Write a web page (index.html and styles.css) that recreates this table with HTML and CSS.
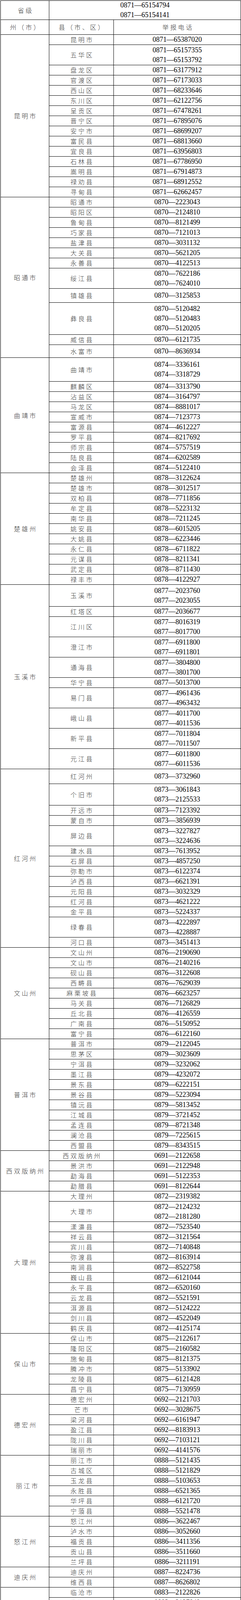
FILE: index.html
```html
<!DOCTYPE html>
<html lang="zh-CN">
<head>
<meta charset="utf-8">
<title>举报电话</title>
<link rel="stylesheet" href="styles.css">
</head>
<body>
<div class="grid">
<div class="c1 zh">省级</div><div class="c23"><span>0871—65154794<br>0871—65154141</span></div>
<div class="c1 zh">州（市）</div><div class="c2 zh">县（市、区）</div><div class="c3 zh">举报电话</div>

<div class="c1 zh s15">昆明市</div><div class="c2 zh">昆明市</div><div class="c3">0871—65387020</div>
<div class="c2 zh">五华区</div><div class="c3"><span>0871—65157355<br>0871—65153792</span></div>
<div class="c2 zh">盘龙区</div><div class="c3">0871—63177912</div>
<div class="c2 zh">官渡区</div><div class="c3">0871—67173033</div>
<div class="c2 zh">西山区</div><div class="c3">0871—68233646</div>
<div class="c2 zh">东川区</div><div class="c3">0871—62122756</div>
<div class="c2 zh">呈贡区</div><div class="c3">0871—67478261</div>
<div class="c2 zh">晋宁区</div><div class="c3">0871—67895076</div>
<div class="c2 zh">安宁市</div><div class="c3">0871—68699207</div>
<div class="c2 zh">富民县</div><div class="c3">0871—68813660</div>
<div class="c2 zh">宜良县</div><div class="c3">0871—63956803</div>
<div class="c2 zh">石林县</div><div class="c3">0871—67786950</div>
<div class="c2 zh">嵩明县</div><div class="c3">0871—67914873</div>
<div class="c2 zh">禄劝县</div><div class="c3">0871—68912552</div>
<div class="c2 zh">寻甸县</div><div class="c3">0871—62662457</div>

<div class="c1 zh s12">昭通市</div><div class="c2 zh">昭通市</div><div class="c3">0870—2223043</div>
<div class="c2 zh">昭阳区</div><div class="c3">0870—2124810</div>
<div class="c2 zh">鲁甸县</div><div class="c3">0870—8121499</div>
<div class="c2 zh">巧家县</div><div class="c3">0870—7121013</div>
<div class="c2 zh">盐津县</div><div class="c3">0870—3031132</div>
<div class="c2 zh">大关县</div><div class="c3">0870—5621205</div>
<div class="c2 zh">永善县</div><div class="c3">0870—4122513</div>
<div class="c2 zh">绥江县</div><div class="c3"><span>0870—7622186<br>0870—7624010</span></div>
<div class="c2 zh">镇雄县</div><div class="c3">0870—3125853</div>
<div class="c2 zh">彝良县</div><div class="c3"><span>0870—5120482<br>0870—5120483<br>0870—5120205</span></div>
<div class="c2 zh">威信县</div><div class="c3">0870—6121735</div>
<div class="c2 zh">水富市</div><div class="c3">0870—8636934</div>

<div class="c1 zh s10">曲靖市</div><div class="c2 zh">曲靖市</div><div class="c3"><span>0874—3336161<br>0874—3318729</span></div>
<div class="c2 zh">麒麟区</div><div class="c3">0874—3313790</div>
<div class="c2 zh">沾益区</div><div class="c3">0874—3164797</div>
<div class="c2 zh">马龙区</div><div class="c3">0874—8881017</div>
<div class="c2 zh">宣威市</div><div class="c3">0874—7123773</div>
<div class="c2 zh">富源县</div><div class="c3">0874—4612227</div>
<div class="c2 zh">罗平县</div><div class="c3">0874—8217692</div>
<div class="c2 zh">师宗县</div><div class="c3">0874—5757519</div>
<div class="c2 zh">陆良县</div><div class="c3">0874—6202589</div>
<div class="c2 zh">会泽县</div><div class="c3">0874—5122410</div>

<div class="c1 zh s11">楚雄州</div><div class="c2 zh">楚雄州</div><div class="c3">0878—3122624</div>
<div class="c2 zh">楚雄市</div><div class="c3">0878—3012517</div>
<div class="c2 zh">双柏县</div><div class="c3">0878—7711856</div>
<div class="c2 zh">牟定县</div><div class="c3">0878—5223132</div>
<div class="c2 zh">南华县</div><div class="c3">0878—7211245</div>
<div class="c2 zh">姚安县</div><div class="c3">0878—6015205</div>
<div class="c2 zh">大姚县</div><div class="c3">0878—6223446</div>
<div class="c2 zh">永仁县</div><div class="c3">0878—6711822</div>
<div class="c2 zh">元谋县</div><div class="c3">0878—8211341</div>
<div class="c2 zh">武定县</div><div class="c3">0878—8711430</div>
<div class="c2 zh">禄丰市</div><div class="c3">0878—4122927</div>

<div class="c1 zh s10">玉溪市</div><div class="c2 zh">玉溪市</div><div class="c3"><span>0877—2023760<br>0877—2023055</span></div>
<div class="c2 zh">红塔区</div><div class="c3">0877—2036677</div>
<div class="c2 zh">江川区</div><div class="c3"><span>0877—8016319<br>0877—8017700</span></div>
<div class="c2 zh">澄江市</div><div class="c3"><span>0877—6911800<br>0877—6911801</span></div>
<div class="c2 zh">通海县</div><div class="c3"><span>0877—3804800<br>0877—3801700</span></div>
<div class="c2 zh">华宁县</div><div class="c3">0877—5013700</div>
<div class="c2 zh">易门县</div><div class="c3"><span>0877—4961436<br>0877—4963432</span></div>
<div class="c2 zh">峨山县</div><div class="c3"><span>0877—4011700<br>0877—4011536</span></div>
<div class="c2 zh">新平县</div><div class="c3"><span>0877—7011804<br>0877—7011507</span></div>
<div class="c2 zh">元江县</div><div class="c3"><span>0877—6011800<br>0877—6011536</span></div>

<div class="c1 zh s14">红河州</div><div class="c2 zh">红河州</div><div class="c3">0873—3732960</div>
<div class="c2 zh">个旧市</div><div class="c3"><span>0873—3061843<br>0873—2125533</span></div>
<div class="c2 zh">开远市</div><div class="c3">0873—7123392</div>
<div class="c2 zh">蒙自市</div><div class="c3">0873—3856939</div>
<div class="c2 zh">屏边县</div><div class="c3"><span>0873—3227827<br>0873—3224636</span></div>
<div class="c2 zh">建水县</div><div class="c3">0873—7613952</div>
<div class="c2 zh">石屏县</div><div class="c3">0873—4857250</div>
<div class="c2 zh">弥勒市</div><div class="c3">0873—6122374</div>
<div class="c2 zh">泸西县</div><div class="c3">0873—6621391</div>
<div class="c2 zh">元阳县</div><div class="c3">0873—3032329</div>
<div class="c2 zh">红河县</div><div class="c3">0873—4621222</div>
<div class="c2 zh">金平县</div><div class="c3">0873—5224337</div>
<div class="c2 zh">绿春县</div><div class="c3"><span>0873—4222897<br>0873—4228887</span></div>
<div class="c2 zh">河口县</div><div class="c3">0873—3451413</div>

<div class="c1 zh s9">文山州</div><div class="c2 zh">文山州</div><div class="c3">0876—2190690</div>
<div class="c2 zh">文山市</div><div class="c3">0876—2140216</div>
<div class="c2 zh">砚山县</div><div class="c3">0876—3122608</div>
<div class="c2 zh">西畴县</div><div class="c3">0876—7629039</div>
<div class="c2 zh">麻栗坡县</div><div class="c3">0876—6623257</div>
<div class="c2 zh">马关县</div><div class="c3">0876—7126829</div>
<div class="c2 zh">丘北县</div><div class="c3">0876—4126559</div>
<div class="c2 zh">广南县</div><div class="c3">0876—5150952</div>
<div class="c2 zh">富宁县</div><div class="c3">0876—6122160</div>

<div class="c1 zh s11">普洱市</div><div class="c2 zh">普洱市</div><div class="c3">0879—2122045</div>
<div class="c2 zh">思茅区</div><div class="c3">0879—3023609</div>
<div class="c2 zh">宁洱县</div><div class="c3">0879—3232062</div>
<div class="c2 zh">墨江县</div><div class="c3">0879—4232072</div>
<div class="c2 zh">景东县</div><div class="c3">0879—6222151</div>
<div class="c2 zh">景谷县</div><div class="c3">0879—5223094</div>
<div class="c2 zh">镇沅县</div><div class="c3">0879—5813452</div>
<div class="c2 zh">江城县</div><div class="c3">0879—3721452</div>
<div class="c2 zh">孟连县</div><div class="c3">0879—8721348</div>
<div class="c2 zh">澜沧县</div><div class="c3">0879—7225615</div>
<div class="c2 zh">西盟县</div><div class="c3">0879—8343515</div>

<div class="c1 zh s4">西双版纳州</div><div class="c2 zh">西双版纳州</div><div class="c3">0691—2122658</div>
<div class="c2 zh">景洪市</div><div class="c3">0691—2122948</div>
<div class="c2 zh">勐海县</div><div class="c3">0691—5122353</div>
<div class="c2 zh">勐腊县</div><div class="c3">0691—8122644</div>

<div class="c1 zh s13">大理州</div><div class="c2 zh">大理州</div><div class="c3">0872—2319382</div>
<div class="c2 zh">大理市</div><div class="c3"><span>0872—2124232<br>0872—2181280</span></div>
<div class="c2 zh">漾濞县</div><div class="c3">0872—7523540</div>
<div class="c2 zh">祥云县</div><div class="c3">0872—3121564</div>
<div class="c2 zh">宾川县</div><div class="c3">0872—7140848</div>
<div class="c2 zh">弥渡县</div><div class="c3">0872—8163914</div>
<div class="c2 zh">南涧县</div><div class="c3">0872—8522758</div>
<div class="c2 zh">巍山县</div><div class="c3">0872—6121044</div>
<div class="c2 zh">永平县</div><div class="c3">0872—6520160</div>
<div class="c2 zh">云龙县</div><div class="c3">0872—5521591</div>
<div class="c2 zh">洱源县</div><div class="c3">0872—5124222</div>
<div class="c2 zh">剑川县</div><div class="c3">0872—4522049</div>
<div class="c2 zh">鹤庆县</div><div class="c3">0872—4125174</div>

<div class="c1 zh s6">保山市</div><div class="c2 zh">保山市</div><div class="c3">0875—2122617</div>
<div class="c2 zh">隆阳区</div><div class="c3">0875—2160582</div>
<div class="c2 zh">施甸县</div><div class="c3">0875—8121375</div>
<div class="c2 zh">腾冲市</div><div class="c3">0875—5133902</div>
<div class="c2 zh">龙陵县</div><div class="c3">0875—6121428</div>
<div class="c2 zh">昌宁县</div><div class="c3">0875—7130959</div>

<div class="c1 zh s6">德宏州</div><div class="c2 zh">德宏州</div><div class="c3">0692—2121703</div>
<div class="c2 zh">芒市</div><div class="c3">0692—3028675</div>
<div class="c2 zh">梁河县</div><div class="c3">0692—6161947</div>
<div class="c2 zh">盈江县</div><div class="c3">0692—8183913</div>
<div class="c2 zh">陇川县</div><div class="c3">0692—7103121</div>
<div class="c2 zh">瑞丽市</div><div class="c3">0692—4141576</div>

<div class="c1 zh s6 shift">丽江市</div><div class="c2 zh">丽江市</div><div class="c3">0888—5121435</div>
<div class="c2 zh">古城区</div><div class="c3">0888—5121829</div>
<div class="c2 zh">玉龙县</div><div class="c3">0888—5103653</div>
<div class="c2 zh">永胜县</div><div class="c3">0888—6521365</div>
<div class="c2 zh">华坪县</div><div class="c3">0888—6121720</div>
<div class="c2 zh">宁蒗县</div><div class="c3">0888—5521478</div>

<div class="c1 zh s5">怒江州</div><div class="c2 zh">怒江州</div><div class="c3">0886—3622467</div>
<div class="c2 zh">泸水市</div><div class="c3">0886—3052660</div>
<div class="c2 zh">福贡县</div><div class="c3">0886—3411356</div>
<div class="c2 zh">贡山县</div><div class="c3">0886—3511660</div>
<div class="c2 zh">兰坪县</div><div class="c3">0886—3211191</div>

<div class="c1 zh s2">迪庆州</div><div class="c2 zh">迪庆州</div><div class="c3">0887—8224736</div>
<div class="c2 zh">维西县</div><div class="c3">0887—8626802</div>

<div class="c1 zh s9">临沧市</div><div class="c2 zh">临沧市</div><div class="c3">0883—2122826</div>
<div class="c2 zh">临翔区</div><div class="c3">0883—2127849</div>
<div class="c2 zh">凤庆县</div><div class="c3">0883—4212020</div>
<div class="c2 zh">云　县</div><div class="c3">0883—3211330</div>
<div class="c2 zh">永德县</div><div class="c3">0883—5211020</div>
<div class="c2 zh">镇康县</div><div class="c3">0883—6630181</div>
<div class="c2 zh">双江县</div><div class="c3">0883—7621341</div>
<div class="c2 zh">耿马县</div><div class="c3">0883—6121209</div>
<div class="c2 zh">沧源县</div><div class="c3">0883—7121300</div>
</div>
</body>
</html>
```

FILE: styles.css
```css
html, body {
  margin: 0;
  padding: 0;
  background: #ffffff;
}

body {
  padding: 1px 0 0 1px;
}

.grid {
  display: grid;
  grid-template-columns: 124px 165px 325px;
  grid-template-rows:
    49px 38px
    26px 52px repeat(20, 26px)
    52px 36px 82px 26px 33px
    61px repeat(20, 26px)
    56px 26px 52px 52px 52px 26px 52px 52px 52px 52px
    38px 55px 26px 26px 52px repeat(7, 26px) 52px
    repeat(26, 26px)
    52px
    repeat(44, 26px)
    34px;
  width: 615px;
  box-sizing: border-box;
  border-top: 1px solid #000000;
  border-left: 1px solid #000000;
  font-family: "Liberation Serif", "Noto Sans CJK SC", serif;
  font-size: 18px;
  color: #000000;
}

.grid > div {
  box-sizing: border-box;
  min-height: 0;
  overflow: hidden;
  border-right: 1px solid #000000;
  border-bottom: 1px solid #000000;
  display: flex;
  align-items: center;
  justify-content: center;
  text-align: center;
  line-height: 25px;
  white-space: nowrap;
}

.c1 { grid-column: 1; }
.c2 { grid-column: 2; }
.c3 { grid-column: 3; }
.c23 { grid-column: 2 / 4; }

.s2 { grid-row: span 2; }
.s4 { grid-row: span 4; }
.s5 { grid-row: span 5; }
.s6 { grid-row: span 6; }
.s9 { grid-row: span 9; }
.s10 { grid-row: span 10; }
.s11 { grid-row: span 11; }
.s12 { grid-row: span 12; }
.s13 { grid-row: span 13; }
.s14 { grid-row: span 14; }
.s15 { grid-row: span 15; }

.grid > .zh {
  font-family: "Noto Sans CJK SC", sans-serif;
  font-size: 16px;
  font-weight: 300;
  letter-spacing: 4px;
  padding-left: 4px;
  color: #3a3a3a;
}

.grid > .shift {
  padding-left: 14px;
}
```
